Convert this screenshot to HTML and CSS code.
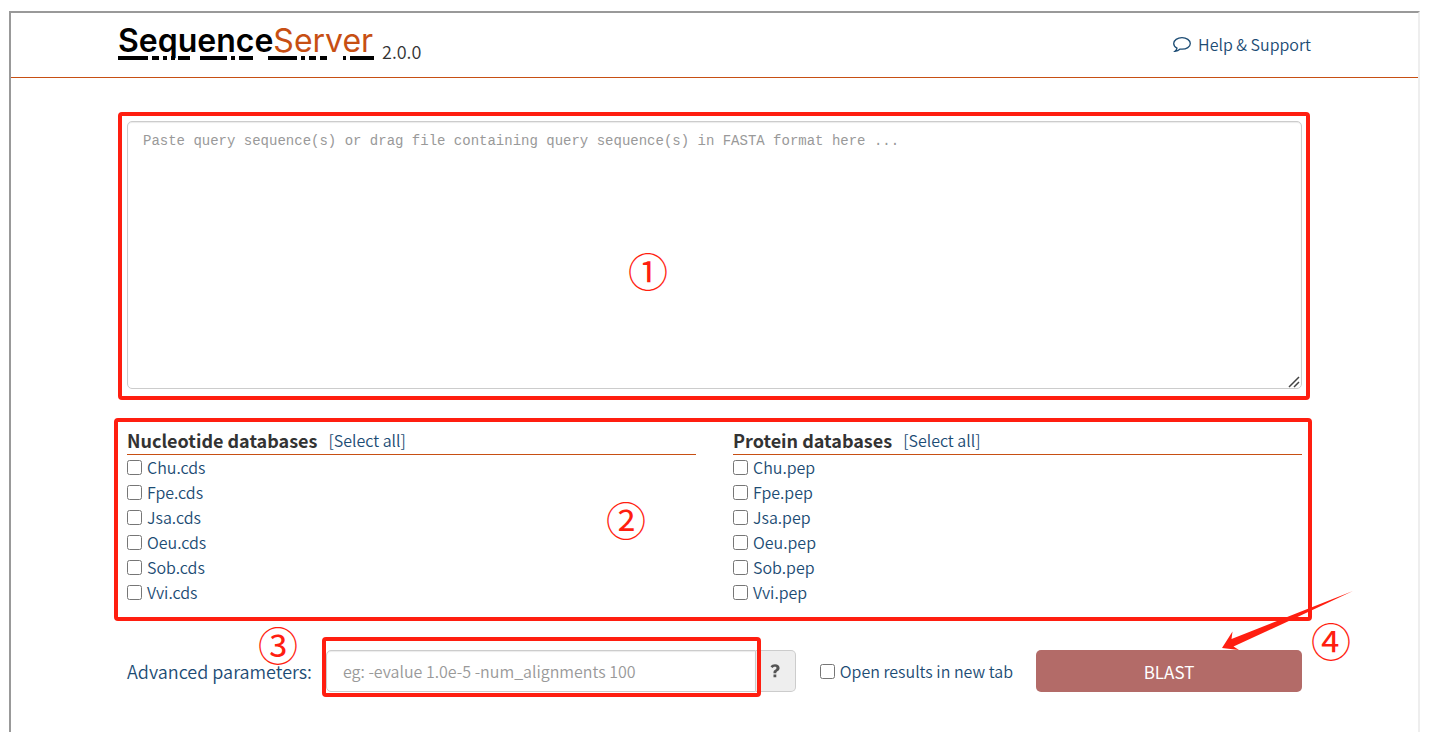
FILE: index.html
```html
<!DOCTYPE html>
<html lang="en">
<head>
<meta charset="utf-8">
<meta name="viewport" content="width=device-width, initial-scale=1">
<title>SequenceServer</title>
<link rel="stylesheet" href="styles.css">
</head>
<body>
<div class="frame">
  <header class="header">
    <div class="header-inner">
      <a class="brand" href="#">
        <span class="logo">
          <span class="logo-text">Sequence<span class="logo-accent">Server</span></span>
          <svg class="logo-dashes" viewBox="0 0 256 4" preserveAspectRatio="none" aria-hidden="true">
            <path d="M0 0h30v4H0zM34 0h7v4h-7zM45 0h4v4h-4zM53 0h4v4h-4zM60 0h12v4H60zM82 0h27v4H82zM113 0h4v4h-4zM121 0h14v4h-14zM150 0h29v4h-29zM183 0h4v4h-4zM191 0h7v4h-7zM202 0h7v4h-7zM225 0h3v4h-3zM232 0h24v4h-24z"/>
          </svg>
        </span>
        <span class="version">2.0.0</span>
      </a>
      <a class="help" href="#">
        <svg class="help-icon" viewBox="0 0 18 15" aria-hidden="true">
          <path d="M9 .7C4.500.7.7 3.200.7 6.500c0 1.900 1.300 3.600 3.300 4.600-.2 1.300-.9 2.300-2 3.200 2.200-.2 3.900-1.100 5.100-2.200.6.100 1.300.1 1.900.1 4.500 0 8.300-2.400 8.300-5.700S13.500.7 9 .7z"/>
        </svg>
        <span>Help &amp; Support</span>
      </a>
    </div>
  </header>

  <main class="main">
    <div class="marked query">
      <textarea class="query-input" aria-label="Query sequences" placeholder="Paste query sequence(s) or drag file containing query sequence(s) in FASTA format here ..."></textarea>
      <svg class="grip" viewBox="0 0 12 12" aria-hidden="true"><path d="M1 11L11 1M6 11l5-5"/></svg>
      <span class="step step-query">①</span>
    </div>

    <div class="marked databases">
      <section class="database">
        <div class="database-head"><h2>Nucleotide databases</h2><button type="button" class="select-all">[Select all]</button></div>
        <label class="check"><input type="checkbox">Chu.cds</label>
        <label class="check"><input type="checkbox">Fpe.cds</label>
        <label class="check"><input type="checkbox">Jsa.cds</label>
        <label class="check"><input type="checkbox">Oeu.cds</label>
        <label class="check"><input type="checkbox">Sob.cds</label>
        <label class="check"><input type="checkbox">Vvi.cds</label>
      </section>
      <section class="database">
        <div class="database-head"><h2>Protein databases</h2><button type="button" class="select-all">[Select all]</button></div>
        <label class="check"><input type="checkbox">Chu.pep</label>
        <label class="check"><input type="checkbox">Fpe.pep</label>
        <label class="check"><input type="checkbox">Jsa.pep</label>
        <label class="check"><input type="checkbox">Oeu.pep</label>
        <label class="check"><input type="checkbox">Sob.pep</label>
        <label class="check"><input type="checkbox">Vvi.pep</label>
      </section>
      <span class="step step-databases">②</span>
    </div>

    <form class="controls">
      <label class="advanced-label" for="advanced">Advanced parameters:</label>
      <div class="advanced">
        <div class="marked advanced-field">
          <input id="advanced" class="advanced-input" type="text" placeholder="eg: -evalue 1.0e-5 -num_alignments 100">
          <span class="step step-advanced">③</span>
        </div>
        <button type="button" class="advanced-help" aria-label="Show parameter help">
          <svg viewBox="0 0 10 14" aria-hidden="true"><path d="M3.500 9.200V8.300C3.500 5.900 6.500 5.900 6.500 4.100c0-.8-.7-1.300-1.600-1.300-1 0-1.700.5-2.300 1.300L.5 2.500C1.500 1 3 .3 5 .3c2.700 0 4.600 1.500 4.600 3.700 0 3-3.300 3.200-3.300 4.700v.5zM3.500 10.500h2.800v2.800H3.500z"/></svg>
        </button>
      </div>
      <label class="check new-tab"><input type="checkbox">Open results in new tab</label>
      <div class="submit">
        <button type="button" class="blast">BLAST</button>
        <svg class="arrow" viewBox="0 0 132 62" aria-hidden="true"><path d="M131 1L9.500 49l1-7.500L0 58l17 2-5.500-3.500L69 30z"/></svg>
        <span class="step step-submit">④</span>
      </div>
    </form>
  </main>
</div>
</body>
</html>
```
FILE: styles.css
```css
* { box-sizing: border-box; }

body {
  margin: 0;
  padding: 11px 11px 0 9px;
  background: #fff;
  color: #333;
  font-family: "Noto Sans CJK SC", "Open Sans", sans-serif;
  font-size: 16px;
  font-weight: 350;
  line-height: 25px;
}

button, input, textarea { font: inherit; }

.frame {
  min-height: calc(100vh - 11px);
  border: 2px solid #999;
  border-right-color: #eee;
  border-bottom: 0;
}

.header { border-bottom: 1px solid #c74f13; }

.header-inner {
  display: flex;
  justify-content: space-between;
  align-items: center;
  max-width: 1193px;
  height: 64px;
  margin: 0 auto;
  padding-bottom: 2px;
}

.brand {
  display: flex;
  align-items: flex-end;
  gap: 8px;
  padding-bottom: 2px;
  color: #333;
  text-decoration: none;
}

.logo { display: flex; flex-direction: column; width: 256px; color: #000; }

.logo-text {
  font-family: Inter, sans-serif;
  font-size: 32px;
  font-weight: 600;
  line-height: 30px;
}

.logo-accent { color: #c74f13; font-weight: 400; }
.logo-dashes { width: 256px; height: 4px; }
.version { font-size: 18px; line-height: 18px; }

.help {
  display: flex;
  align-items: center;
  gap: 7px;
  color: #1c4c74;
  text-decoration: none;
}

.help-icon {
  width: 18px;
  height: 15px;
  margin-top: 1px;
  fill: none;
  stroke: currentColor;
  stroke-width: 1.3;
}

.main { max-width: 1175px; margin: 0 auto; padding: 43px 0 40px; }

.marked { position: relative; }

.marked::after {
  content: "";
  position: absolute;
  border: 4px solid #ff1e10;
  border-radius: 4px;
  pointer-events: none;
}

.query::after { inset: -9px -8px -11px -9px; }
.databases::after { inset: -11px -10px -16px -13px; }
.advanced-field::after { inset: -13px -5px -5px -4px; }

.step {
  position: absolute;
  color: #ff1e10;
  font-size: 40px;
  font-weight: 400;
  line-height: 40px;
  pointer-events: none;
}

.step-query { top: 129px; left: 501px; }
.step-databases { top: 70px; left: 479px; }
.step-advanced { top: -26px; left: -68px; }
.step-submit { top: -30px; right: -49px; }

.query-input {
  display: block;
  width: 100%;
  height: 268px;
  padding: 9px 15px;
  border: 1px solid #ccc;
  border-radius: 5px;
  box-shadow: inset 0 1px 1px rgba(0, 0, 0, .08);
  font-family: "Liberation Mono", monospace;
  font-size: 14px;
  line-height: 20px;
}

.query-input::-webkit-resizer { background: transparent; }

.grip {
  position: absolute;
  right: 2px;
  bottom: 1px;
  width: 12px;
  height: 12px;
  fill: none;
  stroke: #444;
  stroke-width: 1.5;
  pointer-events: none;
}

::placeholder { color: #999; opacity: 1; }

.databases {
  display: grid;
  grid-template-columns: 1fr 1fr;
  gap: 37px;
  margin-top: 40px;
}

.database-head {
  display: flex;
  align-items: flex-start;
  gap: 11px;
  height: 26px;
  border-bottom: 1px solid #c74f13;
  line-height: 22px;
}

.database-head h2 { margin: 0; font-size: 18px; font-weight: 700; }

.select-all {
  padding: 0;
  border: 0;
  background: none;
  color: #1c4c74;
}

.check {
  display: flex;
  align-items: center;
  gap: 5px;
  color: #1c4c74;
}

.check input { width: 15px; height: 15px; margin: 0; }

.controls {
  display: flex;
  align-items: center;
  margin-top: 45px;
}

.advanced-label { color: #1c4c74; font-size: 18px; }

.advanced { display: flex; flex: 1; margin-left: 14px; }
.advanced-field { flex: 1; }

.advanced-input {
  display: block;
  width: 100%;
  height: 42px;
  padding: 0 16px;
  border: 1px solid #ccc;
  border-radius: 5px 0 0 5px;
  box-shadow: inset 0 1px 1px rgba(0, 0, 0, .08);
}

.advanced-help {
  display: flex;
  align-items: center;
  justify-content: center;
  width: 40px;
  border: 1px solid #ccc;
  border-left: 0;
  border-radius: 0 5px 5px 0;
  background: #eee;
}

.advanced-help svg { width: 10px; height: 14px; fill: #555; }

.new-tab { margin: 0 23px 0 24px; }

.submit { position: relative; width: 266px; }

.blast {
  display: block;
  width: 100%;
  height: 42px;
  border: 0;
  border-radius: 5px;
  background: #b36b68;
  color: #fff;
  font-size: 17px;
  font-weight: 400;
}

.arrow {
  position: absolute;
  top: -60px;
  right: -52px;
  width: 132px;
  height: 62px;
  fill: #ff1e10;
  pointer-events: none;
}
```
